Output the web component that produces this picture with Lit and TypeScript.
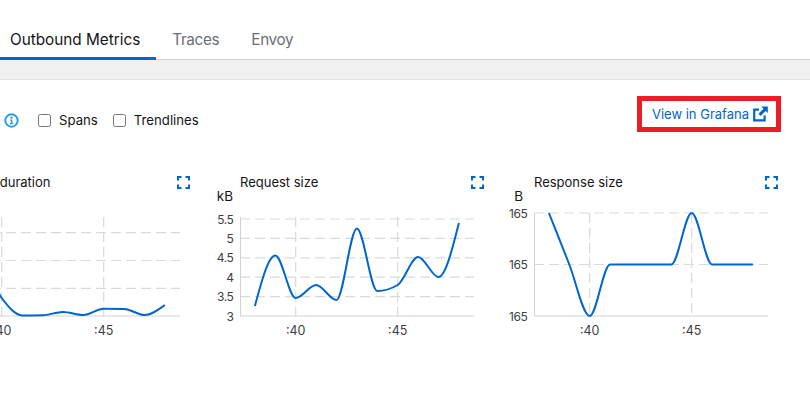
import { LitElement, html, css, svg } from "lit";
import { customElement } from "lit/decorators.js";

type Pt = [number, number];

// d3 curveMonotoneX
function monotone(pts: Pt[]): string {
  const n = pts.length;
  const sl: number[] = [];
  for (let i = 0; i < n - 1; i++) sl.push((pts[i + 1][1] - pts[i][1]) / (pts[i + 1][0] - pts[i][0]));
  const t: number[] = new Array(n).fill(0);
  for (let i = 1; i < n - 1; i++) {
    const h0 = pts[i][0] - pts[i - 1][0];
    const h1 = pts[i + 1][0] - pts[i][0];
    const p = (sl[i - 1] * h1 + sl[i] * h0) / (h0 + h1);
    const s0 = sl[i - 1];
    const s1 = sl[i];
    t[i] = (Math.sign(s0) + Math.sign(s1)) * Math.min(Math.abs(s0), Math.abs(s1), 0.5 * Math.abs(p)) || 0;
  }
  t[0] = (3 * sl[0] - t[1]) / 2;
  t[n - 1] = (3 * sl[n - 2] - t[n - 2]) / 2;
  let d = `M${pts[0][0]} ${pts[0][1]}`;
  for (let i = 0; i < n - 1; i++) {
    const h = (pts[i + 1][0] - pts[i][0]) / 3;
    d += `C${pts[i][0] + h} ${pts[i][1] + h * t[i]} ${pts[i + 1][0] - h} ${pts[i + 1][1] - h * t[i + 1]} ${pts[i + 1][0]} ${pts[i + 1][1]}`;
  }
  return d;
}

interface Chart {
  title: string;
  unit: string;
  unitX: number;
  gridY: number[];
  ticks: { y: number; label: string }[];
  line: number[];
}

// Plot coordinates are local to a 294px card; SVG top sits 192px down the page.
const TOP = 192;
const BASE = 316 - TOP;
const X40 = 95.7;
const STEP = 20.4;
const xOf = (i: number) => X40 + (i - 2) * STEP;

const charts: Chart[] = [
  {
    title: "Request duration",
    unit: "",
    unitX: 0,
    gridY: [232.7, 260.5, 288.3].map((v) => v - TOP),
    ticks: [],
    line: [262, 262, 298, 315.5, 315.2, 312, 315, 308.8, 309, 315, 305].map((v) => v - TOP),
  },
  {
    title: "Request size",
    unit: "kB",
    unitX: 33,
    gridY: [219, 238.4, 257.8, 277.2, 296.6].map((v) => v - TOP),
    ticks: [
      { y: 219, label: "5.5" },
      { y: 238.4, label: "5" },
      { y: 257.8, label: "4.5" },
      { y: 277.2, label: "4" },
      { y: 296.6, label: "3.5" },
      { y: 316, label: "3" },
    ],
    line: [306, 255.5, 298, 285, 300, 228.5, 291, 285, 257, 277, 223].map((v) => v - TOP),
  },
  {
    title: "Response size",
    unit: "B",
    unitX: 29,
    gridY: [213, 264.5].map((v) => v - TOP),
    ticks: [
      { y: 213, label: "165" },
      { y: 264.5, label: "165" },
      { y: 316, label: "165" },
    ],
    line: [213, 264.5, 316, 264.5, 264.5, 264.5, 264.5, 213, 264.5, 264.5, 264.5].map((v) => v - TOP),
  },
];

@customElement("app-root")
export class AppRoot extends LitElement {
  static styles = css`
    :host {
      display: block;
      width: 810px;
      height: 417px;
      overflow: hidden;
      background: #fff;
      font-family: Inter, "Noto Sans", sans-serif;
      color: #151515;
    }
    .tabs {
      display: flex;
      padding-top: 20px;
      border-bottom: 1px solid #d2d2d2;
      height: 39px;
    }
    .tab {
      padding: 0 16px;
      height: 40px;
      box-sizing: border-box;
      font-size: 15.3px;
      line-height: 40px;
      letter-spacing: -0.35px;
      color: #6a6e73;
    }
    .tab.active {
      padding-left: 10px;
      letter-spacing: 0;
      color: #151515;
      border-bottom: 3px solid #06c;
    }
    .band {
      height: 19px;
      background: #f0f0f0;
      border-bottom: 1px solid #e4e4e4;
    }
    .toolbar {
      display: flex;
      justify-content: space-between;
      align-items: flex-start;
      padding: 16px 29px 0 4px;
    }
    .filters {
      display: flex;
      align-items: center;
      height: 24px;
      margin-top: 12px;
      font-size: 13.2px;
    }
    .info {
      width: 15px;
      height: 15px;
      margin-right: 19px;
      display: block;
    }
    .filters label {
      display: flex;
      align-items: center;
      gap: 8px;
      margin-right: 15px;
    }
    .filters input {
      width: 13px;
      height: 13px;
      margin: 0;
    }
    .link {
      display: flex;
      align-items: center;
      gap: 4px;
      height: 36px;
      box-sizing: border-box;
      border: 5px solid #ee1c25;
      padding: 0 8px 0 10px;
      font-size: 13px;
      color: #06c;
      text-decoration: none;
    }
    .link svg {
      width: 15px;
      height: 16px;
      display: block;
    }
    .charts {
      display: flex;
      margin: 40px 0 0 -94px;
    }
    .card {
      flex: none;
      width: 294px;
    }
    .head {
      display: flex;
      justify-content: space-between;
      align-items: center;
      height: 20px;
      padding: 0 10px 0 40px;
      font-size: 13px;
    }
    .expand {
      width: 13px;
      height: 13px;
      display: block;
    }
    .plot {
      display: block;
      width: 294px;
      height: 160px;
      overflow: visible;
      font-family: Inter, "Noto Sans", sans-serif;
    }
    .plot text {
      font-size: 12.5px;
      fill: #3c3f42;
    }
    .plot .tick {
      font-size: 12px;
      letter-spacing: -0.4px;
    }
    .plot .unit {
      font-size: 13.5px;
      fill: #151515;
    }
    .axis {
      stroke: #d2d2d2;
      stroke-width: 1;
      fill: none;
    }
    .grid {
      stroke: #d9d9d9;
      stroke-width: 1.2;
      stroke-dasharray: 10 5;
      fill: none;
    }
    .series {
      stroke: #06c;
      stroke-width: 2;
      fill: none;
    }
  `;

  private plot(c: Chart) {
    const right = 274;
    const top = Math.min(c.gridY[0], 25);
    return html`<svg class="plot" viewBox="0 0 294 160" aria-hidden="true">
      ${c.unit ? svg`<text class="unit" x=${c.unitX} y="9" text-anchor="end">${c.unit}</text>` : ""}
      ${c.gridY.map((y) => svg`<line class="grid" x1="40" x2=${right} y1=${y} y2=${y}></line>`)}
      ${[X40, X40 + 102].map((x) => svg`<line class="grid" x1=${x} x2=${x} y1=${top} y2=${BASE}></line>`)}
      <path class="axis" d="M40.5 ${top}V${BASE}H${right}"></path>
      ${c.ticks.map(
        (t) => svg`<text class="tick" x="33.5" y=${t.y - TOP + 4.5} text-anchor="end">${t.label}</text>`,
      )}
      <text x=${X40} y=${BASE + 19} text-anchor="middle">:40</text>
      <text x=${X40 + 102} y=${BASE + 19} text-anchor="middle">:45</text>
      <path class="series" d=${monotone(c.line.map((y, i): Pt => [xOf(i), y]))}></path>
    </svg>`;
  }

  render() {
    return html`
      <div class="tabs">
        <div class="tab active">Outbound Metrics</div>
        <div class="tab">Traces</div>
        <div class="tab">Envoy</div>
      </div>
      <div class="band"></div>
      <div class="toolbar">
        <div class="filters">
          <svg class="info" viewBox="0 0 15 15" aria-hidden="true">
            <circle cx="7.5" cy="7.5" r="6.2" fill="none" stroke="#2b9af3" stroke-width="2"></circle>
            <circle cx="7.5" cy="4.6" r="1.2" fill="#2b9af3"></circle>
            <path d="M5.9 6.4h2.5v3.7h1v1.2H5.8v-1.2h1V7.6h-.9z" fill="#2b9af3"></path>
          </svg>
          <label><input type="checkbox" />Spans</label>
          <label><input type="checkbox" />Trendlines</label>
        </div>
        <a class="link" href="#">
          View in Grafana
          <svg viewBox="0 0 15 16" aria-hidden="true">
            <path d="M6 3.6H1.2V14.4H11.6V9.5" fill="none" stroke="#06c" stroke-width="2.2"></path>
            <path d="M8.3.6H14.8V7.1L12.6 4.9 7.6 9.9 5.5 7.8 10.5 2.8z" fill="#06c"></path>
          </svg>
        </a>
      </div>
      <div class="charts">
        ${charts.map(
          (c) => html`<div class="card">
            <div class="head">
              <span>${c.title}</span>
              <svg class="expand" viewBox="0 0 13 13" aria-hidden="true">
                <path d="M1 4.5V1h3.5M8.5 1H12v3.5M12 8.5V12H8.5M4.5 12H1V8.5" fill="none" stroke="#06c" stroke-width="2"></path>
              </svg>
            </div>
            ${this.plot(c)}
          </div>`,
        )}
      </div>
    `;
  }
}
